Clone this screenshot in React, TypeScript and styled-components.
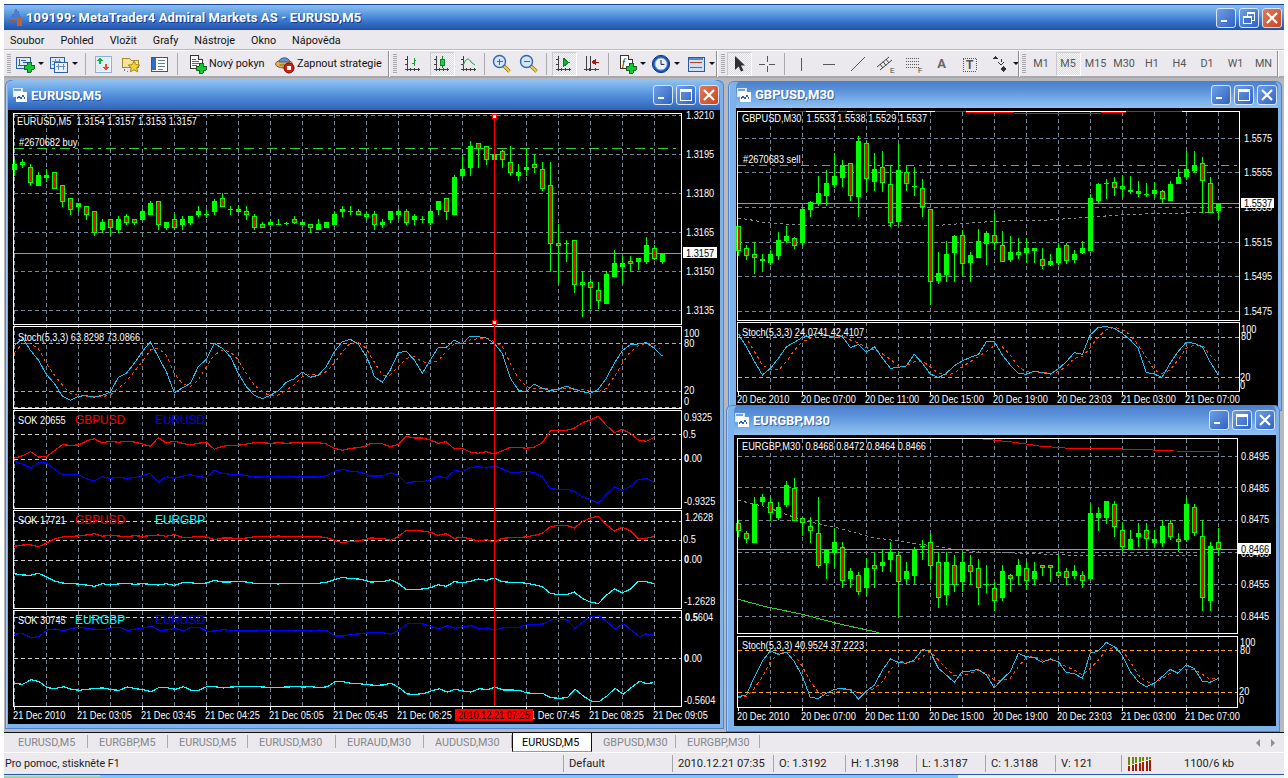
import React from "react";
import styled, { createGlobalStyle } from "styled-components";

const UI = `Roboto, "Liberation Sans", sans-serif`;
const CHART = `"Liberation Sans", Arial, sans-serif`;

const Global = createGlobalStyle`
  html, body { margin: 0; padding: 0; background: #fff; }
  #root { width: 1288px; height: 778px; overflow: hidden; }
`;

const Page = styled.div`
  width: 1288px; height: 778px; background: #fff; display: flex; flex-direction: column;
  padding-top: 4px; box-sizing: border-box; overflow: hidden;
  font-family: ${UI}; font-size: 11px; color: #222;
`;
const AppWindow = styled.div`
  width: 1280px; margin-left: 4px; height: 770px; display: flex; flex-direction: column; background: #ebe9ed;
`;
const AppTitle = styled.div`
  height: 26px; box-sizing: border-box; border-top: 1px solid #1c46a4; display: flex; align-items: center; padding-left: 5px;
  background: linear-gradient(#86bcee 0, #7cb4ea 12%, #4f8fdb 45%, #3470c6 70%, #2650aa 100%);
`;
const AppTitleText = styled.div`
  font: 700 13px ${UI}; color: #fff; text-shadow: 1px 1px 0 #16388c; margin-left: 2px; letter-spacing: .12px; white-space: pre;
`;
const Spacer = styled.div` flex: 1; `;
const Controls = styled.div<{ $gap?: number; $right: number }>`
  display: flex; gap: ${p => p.$gap ?? 3}px; margin-right: ${p => p.$right}px;
`;
const Ctl = styled.div<{ $red?: boolean; $size?: number }>`
  width: ${p => p.$size ?? 20}px; height: ${p => p.$size ?? 20}px; box-sizing: border-box; border: 1px solid #d8e6f8; border-radius: 3px;
  display: flex; align-items: center; justify-content: center;
  background: ${p => p.$red ? "linear-gradient(135deg,#e07a5a,#c9451f)" : "linear-gradient(135deg,#6f9fe4,#2f62c4)"};
`;
const Menu = styled.div`
  height: 20px; display: flex; align-items: center; background: #ebe9ed;
`;
const MenuItem = styled.div` padding: 0 8px; font-size: 10.8px; color: #111; &:first-child { margin-left: -2px; } `;
const Toolbar = styled.div`
  height: 28px; box-sizing: border-box; border-top: 1px solid #fff; border-bottom: 2px solid #a8a7ab; display: flex; align-items: center; background: #ebe9ed;
  box-shadow: 0 -1px 0 #b9b8bc;
  position: relative;
`;
const Grip = styled.div<{ $w: number }>`
  width: ${p => p.$w}px; flex: none; align-self: stretch; display: flex; justify-content: center; align-items: center;
  &::before { content: ""; width: 4px; height: 20px; background: repeating-linear-gradient(#a9a8ac 0 1px, transparent 1px 2px); }
`;
const Sep = styled.div<{ $w: number }>`
  width: ${p => p.$w}px; flex: none; height: 22px; display: flex; justify-content: center;
  &::before { content: ""; width: 1px; background: #aaa9ad; }
`;
const EndSep = styled.div<{ $w: number }>`
  width: ${p => p.$w}px; flex: none; height: 26px; display: flex; justify-content: flex-start;
  &::before { content: ""; width: 1px; background: #8f8e92; box-shadow: 1px 0 0 #fff; }
`;
const Slot = styled.div<{ $w: number; $start?: number }>`
  width: ${p => p.$w}px; flex: none; height: 24px; display: flex; align-items: center;
  justify-content: ${p => p.$start !== undefined ? "flex-start" : "center"};
  padding-left: ${p => p.$start ?? 0}px; box-sizing: border-box;
`;
const Face = styled.div<{ $active?: boolean }>`
  width: 25px; height: 24px; box-sizing: border-box; display: flex; align-items: center; justify-content: center;
  color: #555; font-size: 10.8px;
  ${p => p.$active ? `
    border: 1px solid; border-color: #c9c8cc #fff #fff #c9c8cc;
    background-color: #f6f5f8;
    background-image: conic-gradient(#dcdbe0 25%, transparent 0 50%, #dcdbe0 0 75%, transparent 0);
    background-size: 2px 2px;
  ` : ""}
`;
const Caret = styled.span`
  width: 0; height: 0; margin-left: 3px; border: 3px solid transparent; border-top: 3px solid #111; border-bottom: 0; flex: none;
`;
const ToolText = styled.span` margin-left: 2px; font-size: 10.8px; color: #111; white-space: nowrap; `;
const LetterA = styled.span` font-weight: 700; font-size: 13px; color: #666; `;
const Mdi = styled.div`
  height: 654px; position: relative; background: #b8b7bb; overflow: hidden;
`;
const ChildWindow = styled.div<{ $x: number; $y: number; $w: number; $h: number; $pad: string }>`
  position: absolute; left: ${p => p.$x}px; top: ${p => p.$y}px; width: ${p => p.$w}px; height: ${p => p.$h}px;
  box-sizing: border-box; padding: ${p => p.$pad}; border-radius: 6px 6px 0 0; display: flex; flex-direction: column;
  background: #7fb2ea; box-shadow: inset 0 0 0 1px #4f83cf, inset 2px 0 0 #a9cdf3;
`;
const ChildTitle = styled.div<{ $active?: boolean; $h: number; $left: number }>`
  height: ${p => p.$h}px; flex: none; display: flex; align-items: center; padding-left: ${p => p.$left}px; border-radius: 6px 6px 0 0;
  background: ${p => p.$active
    ? "linear-gradient(#8fc2f0 0, #74ade8 22%, #4f8cd9 55%, #2f64b8 100%)"
    : "linear-gradient(#4a7ecb 0, #5c92da 35%, #7cb2ea 75%, #90c2f0 100%)"};
`;
const ChildTitleText = styled.div`
  font: 700 13px ${UI}; color: #fff; margin-left: 4px; white-space: pre; text-shadow: 1px 1px 0 rgba(24,60,140,.65);
`;
const Client = styled.div` flex: 1; background: #000; min-height: 0; overflow: hidden; line-height: 0; `;
const ChartSvg = styled.svg` display: block; `;
const Tabs = styled.div`
  height: 20px; box-sizing: border-box; border-top: 1px solid #111; display: flex; align-items: stretch; background: #ebe9ed; flex: none;
`;
const Tab = styled.div<{ $w: number; $active?: boolean }>`
  width: ${p => p.$w}px; box-sizing: border-box; display: flex; align-items: center; padding-left: ${p => p.$active ? 9 : 11}px;
  font-size: 10.8px; color: ${p => p.$active ? "#000" : "#85858a"};
  &:first-child { padding-left: 14px; }
  ${p => p.$active
    ? `background: #fff; border: 1px solid #111; border-bottom: 1px solid #999; margin-top: -1px;`
    : `background: linear-gradient(#aaa,#aaa) right 2px / 1px 13px no-repeat;`}
`;
const TabArrows = styled.div` margin-left: auto; display: flex; align-items: center; gap: 11px; margin-right: 9px; `;
const Arrow = styled.span<{ $left?: boolean }>`
  width: 0; height: 0; border: 4px solid transparent; border-right-width: ${p => p.$left ? 4 : 0}px; border-left-width: ${p => p.$left ? 0 : 4}px;
  border-right-color: #8f8e92; border-left-color: #8f8e92;
`;
const Status = styled.div`
  height: 22px; box-sizing: border-box; border-top: 1px solid #fff; display: flex; align-items: center; background: #ebe9ed; flex: none;
`;
const Cell = styled.div<{ $w: number; $first?: boolean }>`
  width: ${p => p.$w}px; box-sizing: border-box; height: 17px; display: flex; align-items: center; flex: none; white-space: nowrap;
  padding-left: ${p => p.$first ? 1 : 5}px; font-size: ${p => p.$first ? 10.7 : 11.2}px; color: #222;
  ${p => p.$first ? "" : "border-left: 1px solid #a5a4a8;"}
`;
const Traffic = styled.span` font-size: 11px; margin-left: 3px; `;
const Taskbar = styled.div`
  height: 4px; display: flex; border-top: 1px solid #2458b8; margin-left: 4px; width: 1280px; flex: none;
`;
const TaskStart = styled.div` width: 96px; background: linear-gradient(#d2ecd2,#6fb56f); `;
const TaskBand = styled.div` width: 858px; background: #8cc2ec; `;
const TaskRest = styled.div` flex: 1; background: #eef4f2; `;

/* ---------- chart text ---------- */
const T = styled.text<{ $fill?: string; $size?: number }>`
  font-family: ${CHART}; font-size: ${p => p.$size ?? 11}px; fill: ${p => p.$fill ?? "#fff"};
`;
const Lbl: React.FC<{ x: number; y: number; c?: string; s?: number; sx?: number; children: React.ReactNode }> = ({ x, y, c, s, sx = .84, children }) => (
  <T $fill={c} $size={s} xmlSpace="preserve" transform={`translate(${x} ${y + 4}) scale(${sx} 1)`}>{children}</T>
);
const Zero: React.FC<{ x: number; y: number }> = ({ x, y }) => <Lbl x={x} y={y}><tspan fontWeight={700}>0</tspan>.00</Lbl>;

/* ---------- icons ---------- */
const Ic: React.FC<{ w?: number; h?: number; children: React.ReactNode; v?: string }> = ({ w = 20, h = 20, v = "0 0 20 20", children }) => (
  <svg width={w} height={h} viewBox={v} shapeRendering="crispEdges" style={{ flex: "none", display: "block" }}>{children}</svg>
);
const Plus: React.FC<{ x: number; y: number }> = ({ x, y }) => (
  <g>
    <path d={`M${x + 3} ${y}h4v3h3v4h-3v3h-4v-3h-3v-4h3z`} fill="#14c832" stroke="#0a5a20" strokeWidth=".9" />
  </g>
);
const Axes: React.FC<{ d?: string }> = ({ d = "#3f3f3f" }) => (
  <path d="M4 2v15M2 15.5h15M7 14v3M11 14v3M15 14v3M2 5h2M2 10h2" stroke={d} fill="none" />
);
const IconNewChart = () => (<Ic><rect x="1" y="3" width="14" height="11" fill="#dbe9fb" stroke="#2e5fa8" /><path d="M4 5v7M3 11h9M6 6h5M8 8h4" stroke="#2e5fa8" /><Plus x={9} y={8} /></Ic>);
const IconTemplates = () => (<Ic><rect x="1" y="3" width="14" height="11" fill="#dbe9fb" stroke="#2e5fa8" /><path d="M3 7h9M3 10h9M6 5v7M10 5v7" stroke="#6c8cc0" /><rect x="5" y="8" width="13" height="10" fill="#e8f1fc" stroke="#2e5fa8" /><path d="M7 12h9M9 10v6M14 10v6" stroke="#6c8cc0" /></Ic>);
const IconMarket = () => (<Ic v="0 0 20 20"><rect x="2" y="2" width="16" height="16" fill="#f4f8fd" stroke="#8fb0d8" /><rect x="3" y="3" width="14" height="14" fill="#e3edf9" /><path d="M7 3l3 4H8v3H6V7H4z" fill="#18b040" /><path d="M13 17l-3-4h2v-3h2v3h2z" fill="#e0502a" /></Ic>);
const IconFolderStar = () => (<Ic><path d="M1 4h7l2 2h7v7H1z" fill="#f6e39a" stroke="#a08a30" /><path d="M3 15v2M6 17h1M1 13v1" stroke="#777" /><path d="M13 7l1.8 3.6 4 .5-3 2.7.9 4-3.7-2-3.6 2 .8-4-3-2.7 4-.5z" fill="#f5d327" stroke="#8c7410" strokeWidth=".8" shapeRendering="auto" /></Ic>);
const IconNavigator = () => (<Ic><rect x="2" y="3" width="16" height="14" fill="#fff" stroke="#2a5aa6" /><rect x="3" y="4" width="4" height="12" fill="#2f6cc4" /><path d="M9 6h7M9 9h7M9 12h7M9 15h5" stroke="#5c7da8" /></Ic>);
const IconOrder = () => (<Ic><path d="M3 1h8l4 4v9H3z" fill="#fff" stroke="#333" /><path d="M11 1v4h4" fill="#ddd" stroke="#333" /><path d="M5 5h4M5 7h7M5 9h7M5 11h5" stroke="#666" /><Plus x={9} y={9} /></Ic>);
const IconStrategy = () => (<Ic w={20} h={20}><g shapeRendering="auto"><ellipse cx="9" cy="10" rx="8.5" ry="4" fill="#e3b255" stroke="#7f5c20" /><path d="M4 8c0-5 10-6 11 0z" fill="#6a92c8" stroke="#3f5f90" /><ellipse cx="9" cy="11" rx="5" ry="1.3" fill="#b98732" /><circle cx="14" cy="14" r="5" fill="#d41f12" stroke="#6d0c06" /><rect x="12" y="12" width="4" height="4" fill="#fff" /></g></Ic>);
const IconBars = () => (<Ic><Axes /><path d="M11 4v8M9 9h2M11 6h2" stroke="#14a030" /></Ic>);
const IconCandle = () => (<Ic><Axes /><path d="M10 2v12" stroke="#14802a" /><rect x="8" y="5" width="4" height="6" fill="#16d63c" stroke="#14802a" /></Ic>);
const IconLine = () => (<Ic><Axes /><path d="M4 12c3-9 6-8 8-4l4 3" stroke="#14a030" fill="none" shapeRendering="auto" /></Ic>);
const Magnifier: React.FC<{ plus?: boolean }> = ({ plus }) => (
  <Ic><g shapeRendering="auto"><path d="M11.5 11.5l6 6" stroke="#8a6d10" strokeWidth="3.4" /><path d="M11.5 11.5l6 6" stroke="#f0d04a" strokeWidth="2" /><circle cx="7.5" cy="7.5" r="6" fill="#d4e6fa" stroke="#2f68b4" strokeWidth="1.4" /></g><path d="M4.5 7.5h6" stroke="#2f68b4" strokeWidth="1.4" />{plus && <path d="M7.5 4.5v6" stroke="#2f68b4" strokeWidth="1.4" />}</Ic>
);
const IconAuto = () => (<Ic><Axes /><path d="M9 4l6 4.5-6 4.5z" fill="#14b034" stroke="#0e7a26" /></Ic>);
const IconShift = () => (<Ic><path d="M4 2v15M2 15.5h15M8 2v15M7 14v3M13 14v3" stroke="#3f3f3f" /><path d="M17 8h-4M13 6l-3 2 3 2z" fill="#b01808" stroke="#b01808" /></Ic>);
const IconIndicators = () => (<Ic><path d="M3 1h8l4 4v9H3z" fill="#fff" stroke="#333" /><path d="M11 1v4h4" fill="#ddd" stroke="#333" /><text x="5" y="12" fontFamily="Liberation Serif" fontStyle="italic" fontSize="11" fill="#222">f</text><Plus x={9} y={9} /></Ic>);
const IconClock = () => (<Ic><g shapeRendering="auto"><circle cx="10" cy="10" r="8.6" fill="#1c56b4" stroke="#0e3a84" /><circle cx="10" cy="10" r="6" fill="#eaf2fb" stroke="#8ab2e4" /><path d="M10 6v4.4h3.4" stroke="#222" fill="none" /></g></Ic>);
const IconTemplateWin = () => (<Ic><rect x="2" y="3" width="16" height="14" fill="#cfe0f6" stroke="#2a5aa6" /><rect x="3" y="4" width="14" height="2" fill="#4f88d4" /><path d="M4 9l2-1 3 1 3-1 4 1" stroke="#c0401c" fill="none" /><path d="M4 13l2 1 3-1 3 1 4-1" stroke="#14a030" fill="none" /></Ic>);
const IconCursor = () => (<Ic><path d="M5 2v14l3.6-3.4 2.4 5 2.4-1.2-2.4-4.8H15z" fill="#2c3034" shapeRendering="auto" /></Ic>);
const IconCross = () => (<Ic><path d="M10 2v6M10 12v6M2 10h6M12 10h6" stroke="#555" /></Ic>);
const IconV = () => (<Ic><path d="M10 4v13" stroke="#555" /></Ic>);
const IconH = () => (<Ic><path d="M3 10h12" stroke="#555" /></Ic>);
const IconTrend = () => (<Ic><path d="M3 17L17 3" stroke="#555" shapeRendering="auto" /></Ic>);
const IconChannel = () => (<Ic><g stroke="#444" shapeRendering="auto"><path d="M1 13L13 3M4 16L16 6M4 10l3 4M7 7.5l3 4M10 5l3 4" /></g><text x="14" y="19" fontFamily="Liberation Sans" fontSize="7" fill="#444">E</text></Ic>);
const IconFibo = () => (<Ic><path d="M2 4h14M2 7h14M2 10h14M2 13h14" stroke="#555" strokeDasharray="1 1" /><text x="14" y="19" fontFamily="Liberation Sans" fontSize="7" fill="#444">F</text></Ic>);
const IconTextBox = () => (<Ic><rect x="3" y="4" width="13" height="13" fill="none" stroke="#555" strokeDasharray="1 1" /><text x="6" y="15" fontFamily="Liberation Sans" fontSize="12" fontWeight="700" fill="#555">T</text></Ic>);
const IconArrows = () => (<Ic><path d="M2 5l3-3 3 3z" fill="#333" /><path d="M8 8l3 3 3-3M11 5v3" fill="none" stroke="#333" /><path d="M10 15l3 3 3-3-3-3z" fill="#333" /></Ic>);
const IconSignal = () => (
  <Ic w={26} h={16} v="0 0 26 16">
    {[0, 1, 2, 3, 4, 5, 6].map(i => (
      <g key={i}>
        <rect x={1 + i * 3.5} y={1} width={2.4} height={8 - i} fill="#6b8c00" />
        <rect x={1 + i * 3.5} y={10 - i} width={2.4} height={i + 5} fill="#a01e06" />
      </g>
    ))}
  </Ic>
);
const IconLogo = () => (
  <Ic w={15} h={20} v="0 0 15 20">
    <path d="M7 1v8M3 7h8M2 9h10" stroke="#4a7ac8" strokeWidth="1.4" /><rect x="5" y="3" width="5" height="6" fill="#4d80cc" />
    <rect x="1" y="12" width="5" height="2" fill="#c84a2c" /><rect x="8" y="10" width="5" height="8" fill="#c8602c" />
  </Ic>
);
const IconChild = () => (
  <Ic w={14} h={14} v="0 0 14 14">
    <rect x="0" y="0" width="9" height="8" fill="#f4f8fd" stroke="#d8e6f8" /><rect x="1" y="1" width="7" height="2" fill="#6f9fe4" />
    <rect x="3" y="4" width="11" height="10" fill="#fff" /><path d="M4 11l2-3 2 3 2-4 2 4" stroke="#2f62c4" fill="none" />
  </Ic>
);
const GMin = () => <Ic w={12} h={12} v="0 0 12 12"><rect x="1" y="8" width="6" height="2.4" fill="#fff" /></Ic>;
const GMax = () => <Ic w={14} h={14} v="0 0 14 14"><rect x="1.5" y="1.5" width="11" height="11" fill="none" stroke="#fff" /><rect x="1" y="1" width="12" height="2.5" fill="#fff" /></Ic>;
const GRestore = () => <Ic w={14} h={14} v="0 0 14 14"><rect x="5" y="1.5" width="7.5" height="7.5" fill="none" stroke="#fff" /><rect x="5" y="1" width="8" height="2" fill="#fff" /><rect x="1.5" y="5" width="7.5" height="7.5" fill="#3f72cc" stroke="#fff" /><rect x="1" y="5" width="8" height="2" fill="#fff" /></Ic>;
const GClose = () => <Ic w={14} h={14} v="0 0 14 14"><path d="M2 2l10 10M12 2L2 12" stroke="#fff" strokeWidth="2.2" shapeRendering="auto" /></Ic>;

/* ---------- chart data ---------- */
type C = [number, number, number, number, number];
type Pt = [number, number];
const eurM5: C[] = [
  [177,192,210,228,1],[178,186,194,203,0],[192,202,248,258,0],[216,225,258,258,1],[207,225,234,245,1],[216,216,267,267,0],[255,255,306,322,0],[294,294,330,345,0],
  [309,309,321,336,1],[318,318,345,360,0],[333,333,399,408,0],[357,366,390,399,1],[357,357,384,408,0],[348,357,390,399,1],[342,348,369,375,0],[357,357,369,375,0],
  [327,333,360,360,1],[303,309,345,345,1],[303,303,375,390,0],[366,366,384,390,1],[342,357,384,390,0],[348,357,375,390,1],[348,348,369,375,1],[318,333,345,351,1],
  [327,342,345,354,1],[297,303,336,345,1],[279,294,321,321,0],[318,327,330,345,1],[318,327,336,336,1],[318,333,345,360,0],[342,348,384,390,0],[366,372,384,384,0],
  [357,366,375,375,1],[357,372,375,375,1],[366,368,371,375,1],[348,357,369,372,0],[363,366,375,375,1],[372,372,384,399,0],[357,372,390,390,1],[366,366,384,384,1],
  [333,342,375,375,1],[318,327,336,350,1],[318,332,335,345,1],[327,333,345,345,0],[333,342,351,360,0],
  [333,342,375,390,0],[357,366,375,384,1],[333,333,360,369,1],[327,333,345,360,1],[327,333,369,375,0],[342,348,360,375,1],[348,357,360,369,1],[327,333,369,375,1],
  [303,303,330,345,1],[294,294,336,360,0],[225,231,345,345,1],[165,207,228,234,1],[123,138,204,228,1],[129,129,147,204,0],[138,138,180,195,0],[162,162,180,180,1],
  [150,153,180,204,0],[138,186,219,228,0],[192,216,228,243,1],[144,201,210,228,1],[162,192,204,219,0],[186,207,267,273,0],[186,255,432,516,0],[372,429,438,552,0],
  [420,428,431,486,1],[420,420,555,579,0],[513,546,555,651,0],[537,546,564,627,0],[546,570,603,627,0],[513,522,612,612,1],[450,489,531,531,1],[468,489,501,552,1],
  [468,483,492,516,0],[474,474,486,510,1],[411,435,486,492,1],[435,444,477,480,0],[459,459,486,492,1],
];
const gbpM30: C[] = [
  [438,438,512,528,0],[495,505,527,540,0],[485,523,533,582,0],[522,538,544,575,0],[510,523,549,555,1],[455,481,527,540,1],[438,468,482,490,1],[470,475,497,506,0],
  [380,388,490,497,1],[362,367,389,410,1],[288,340,370,378,1],[270,310,347,378,1],[218,288,314,325,1],[240,256,293,320,1],[250,250,347,362,0],[168,183,350,410,1],
  [183,190,298,335,0],[218,268,305,333,1],[212,262,310,335,0],[255,313,428,440,0],[192,270,425,435,1],[258,277,313,333,0],[262,318,321,347,1],[297,325,382,410,0],
  [388,388,605,675,0],[515,580,603,612,1],[483,522,585,605,1],[465,468,518,605,1],[450,465,553,585,0],[517,525,549,605,1],[447,484,533,535,1],[452,458,491,555,1],
  [398,465,490,510,0],[453,496,545,547,0],[468,516,540,545,1],[473,517,524,537,0],[475,504,518,548,1],[505,505,513,550,1],[505,538,558,567,0],[522,544,555,557,1],
  [490,504,549,555,1],[490,496,544,553,0],[510,523,540,550,1],[484,504,518,523,1],[343,355,513,513,1],[310,312,362,370,1],[297,310,313,357,1],[290,305,325,347,0],
  [288,319,326,350,0],[288,330,336,342,1],[303,334,342,352,1],[310,341,346,350,0],[305,331,342,350,1],[330,334,356,370,0],[304,313,362,362,1],[268,292,311,312,1],
  [213,268,290,300,1],[213,256,273,278,1],[232,250,304,398,0],[292,310,398,398,0],[368,370,392,420,1],
];
const eurgbpM30: C[] = [
  [345,355,377,395,0],[377,385,403,413,0],[277,298,413,413,1],[268,277,290,300,1],[277,290,325,348,0],[290,307,340,345,1],[228,240,300,307,1],[220,250,347,347,0],
  [337,338,355,392,0],[337,364,377,413,0],[277,385,482,490,0],[433,433,474,522,1],[368,411,443,490,1],[411,425,529,548,0],[490,498,522,548,1],[500,511,560,570,0],
  [460,490,549,574,1],[442,481,491,548,0],[433,472,483,500,1],[412,442,465,500,1],[442,451,530,635,0],[470,498,522,538,1],[425,433,513,538,1],[404,424,427,465,1],
  [385,412,482,522,0],[442,472,578,608,0],[442,472,570,600,1],[450,481,539,560,0],[442,472,530,560,1],[450,481,500,540,0],[462,490,548,600,0],[480,538,541,565,1],
  [532,548,587,617,0],[480,498,579,587,1],[507,511,521,560,0],[462,481,512,540,1],[470,490,529,555,0],[472,498,521,540,1],[481,481,490,512,0],[481,481,490,530,0],
  [450,500,512,520,0],[490,499,520,540,0],[480,498,513,522,1],[498,511,529,548,0],[297,325,522,522,1],[307,325,338,377,1],[288,288,338,356,1],[288,298,365,395,0],
  [350,376,425,442,0],[375,403,433,433,1],[355,385,395,425,1],[355,376,403,433,0],[375,403,413,425,1],[345,364,413,425,1],[345,355,395,405,0],[385,403,412,442,0],
  [277,298,404,412,1],[297,307,385,394,0],[345,394,578,617,0],[412,424,587,617,1],[370,412,432,452,0],
];

const P = (a: number[], fx: (x: number) => number, fy: (y: number) => number): Pt[] => {
  const out: Pt[] = [];
  for (let i = 0; i < a.length; i += 2) out.push([fx(a[i]), fy(a[i + 1])]);
  return out;
};
const str = (p: Pt[]) => p.map(q => `${q[0].toFixed(1)},${q[1].toFixed(1)}`).join(" ");

const L6 = (x: number) => x / 3;
const L7 = (x: number) => 370 + x / 3;
const Y3 = (y: number) => 320 + y / 3;
const raw = (y: number) => y;

const eurStochBlue = [
  ...P([42,78,68,55,92,92,115,120,139,163,163,190,187,228,211,241,235,229,259,227,283,232,307,226,331,217,355,172,379,160,403,130,427,95,451,65,475,110,499,155,523,218,547,204,571,190,595,140,619,118,643,70,667,85,691,110,715,160,739,200,763,226,787,236,811,226,835,212,859,187,883,176,907,156,931,172,955,166,979,140,1003,95,1027,65,1051,58,1075,72,1099,110], L6, Y3),
  ...P([0,134,13,170,37,187,61,150,85,98,109,94,133,120,157,160,181,120,205,82,229,82,253,60,277,72,301,48,325,50,349,54,373,70,397,100,421,175,445,210,469,216,493,192,517,205,541,212,565,208,589,198,613,208,637,215,661,220,685,208,709,175,733,130,757,92,781,74,805,72,829,68,853,85,877,108], L7, Y3),
];
const eurStochRed = [
  ...P([42,100,68,70,92,72,115,85,139,130,163,165,187,195,211,220,235,226,259,228,283,230,307,230,331,225,355,205,379,185,403,155,427,125,451,90,475,85,499,105,523,160,547,190,571,200,595,180,619,140,643,105,667,90,691,95,715,120,739,160,763,195,787,215,811,228,835,225,859,210,883,195,907,170,931,163,955,165,979,155,1003,130,1027,95,1051,70,1075,68,1099,85], L6, Y3),
  ...P([0,105,37,165,61,165,85,140,109,115,133,110,157,125,181,130,205,122,229,95,253,72,277,68,301,60,325,56,349,54,373,65,397,80,421,130,445,175,469,200,493,205,517,205,541,207,565,208,589,205,613,207,637,208,661,214,685,215,709,205,733,170,757,130,781,95,805,78,829,70,853,75,869,85], L7, Y3),
];
const sok1 = [
  ...P([42,415,68,407,92,395,115,411,139,410,163,392,187,374,211,376,235,375,259,363,283,356,307,369,331,364,355,367,379,364,403,366,427,372,451,379,475,353,499,369,523,364,547,370,571,375,595,370,619,366,643,388,667,379,691,376,715,376,739,372,763,368,787,368,811,370,835,368,859,370,883,368,907,368,931,368,955,368,979,372,1003,385,1027,391,1051,385,1075,383,1099,377], L6, raw),
  ...P([0,371,37,371,61,380,85,373,109,349,133,354,157,354,181,360,205,370,229,365,253,387,277,385,301,396,325,400,349,395,373,402,397,392,421,382,445,382,469,385,493,381,517,368,541,333,565,331,589,331,613,325,637,308,661,300,685,289,709,316,733,338,757,328,781,340,805,360,829,364,853,352], L7, raw),
];
const sok2 = [
  ...P([42,679,68,675,92,674,115,680,139,670,163,657,187,651,211,649,235,648,259,645,283,641,307,649,331,645,355,648,379,650,403,647,427,649,451,647,475,645,499,649,523,644,547,652,571,652,595,649,619,651,643,659,667,654,691,654,715,656,739,654,763,650,787,650,811,650,835,648,859,650,883,650,907,650,931,650,955,650,979,653,1003,661,1027,668,1051,664,1075,663,1099,658], L6, raw),
  ...P([0,654,37,655,61,661,85,650,109,631,133,631,157,633,181,637,205,646,229,641,253,655,277,652,301,656,325,663,349,659,373,666,397,655,421,653,445,653,469,650,493,646,517,640,541,620,565,616,589,616,613,624,637,605,661,594,685,589,709,614,733,633,757,622,781,632,805,656,829,655,853,649], L7, raw),
];
const sok3Blue = P([35,103,55,100,77,114,96,108,116,90,135,87,155,93,175,85,194,82,214,85,234,88,253,89,273,84,292,82,312,92,332,87,351,84,371,78,390,91,410,90,430,85,449,93,469,82,488,82,508,94,527,93,547,89,567,92,586,93,606,93,625,93,645,92,665,90,684,91,704,92,723,93,743,92,763,93,782,90,802,93,821,108,841,108,860,103,880,102,900,99,919,97,939,98,958,103,978,90,998,71,1017,70,1037,72,1056,80,1076,87,1096,77,1115,85,1135,80,1154,77,1174,87,1194,84,1213,91,1233,83,1252,83,1272,82,1291,74,1311,73,1331,72,1350,60,1370,58,1390,60,1409,85,1429,65,1448,50,1468,48,1487,65,1507,88,1527,70,1546,90,1568,110,1582,102,1600,105], x => x / 2.45, raw);

const gbpIdx = (x: number) => 730 + x / 2.8125;
const gbpBlue = P([23,762,46,800,69,845,91,885,114,865,136,835,159,800,181,787,204,772,226,768,249,758,271,765,294,773,316,770,339,803,361,793,384,817,406,800,429,835,451,865,473,862,496,858,518,823,541,850,563,882,586,893,608,880,631,857,653,843,676,832,698,824,721,785,743,785,766,825,788,855,811,880,833,883,856,873,878,878,901,882,923,867,946,845,968,818,991,823,1013,765,1036,742,1058,740,1081,745,1103,760,1126,780,1148,805,1170,877,1193,882,1215,892,1238,850,1260,815,1283,787,1305,790,1328,800,1350,845,1373,885], gbpIdx, y => 80 + y / 3);
const gbpRed = P([23,762,46,775,69,815,91,855,114,868,136,870,159,845,181,810,204,785,226,775,249,765,271,765,294,770,316,768,339,780,361,788,384,803,406,810,429,822,451,838,473,858,496,858,518,845,541,843,563,860,586,880,608,885,631,880,653,860,676,845,698,830,721,815,743,797,766,800,788,825,811,860,833,875,856,875,878,877,901,880,923,875,946,860,968,835,991,830,1013,803,1036,770,1058,750,1081,742,1103,748,1126,765,1148,795,1170,830,1193,870,1215,880,1238,870,1260,840,1283,805,1305,795,1328,795,1350,825,1373,850], gbpIdx, y => 80 + y / 3);
const gbpMa = P([23,415,50,418,100,428,200,435,300,437,400,438,500,437,600,435,700,427,800,422,900,420,1000,412,1100,405,1200,400,1373,398], gbpIdx, y => 80 + y / 3);
const egBlue = P([23,875,46,870,69,815,91,768,114,737,136,748,159,742,181,770,204,815,226,878,249,880,271,865,294,853,316,850,339,855,361,882,384,858,406,840,429,795,451,762,473,772,496,775,518,765,541,733,563,740,586,790,608,810,631,832,653,800,676,798,698,793,721,810,743,848,766,822,788,800,811,745,833,755,856,758,878,772,901,762,923,770,946,803,968,805,991,820,1013,745,1036,738,1058,712,1081,725,1103,750,1126,800,1148,830,1170,845,1193,835,1215,815,1238,793,1260,805,1283,780,1305,790,1328,828,1350,832,1373,820], gbpIdx, y => 405 + y / 3);
const egRed = P([23,877,46,875,69,850,91,815,114,770,136,745,159,740,181,750,204,785,226,830,249,862,271,873,294,865,316,855,339,853,361,865,384,863,406,850,429,830,451,793,473,770,496,772,518,770,541,755,563,740,586,765,608,790,631,812,653,813,676,805,698,797,721,805,743,825,766,825,788,820,811,785,833,757,856,755,878,765,901,765,923,770,946,785,968,795,991,810,1013,790,1036,765,1058,735,1081,727,1103,735,1126,770,1148,810,1170,830,1193,835,1215,822,1238,805,1260,795,1283,792,1305,792,1328,808,1350,822,1373,820], gbpIdx, y => 405 + y / 3);
const egMa = P([23,286,100,305,200,345,300,368,400,397,500,412,600,428,700,441,800,444,1000,452,1200,450,1320,450], gbpIdx, y => 405 + y / 3);
const egGreen = P([23,583,100,605,200,627,300,655,420,683], gbpIdx, y => 405 + y / 3);
const egTop = P([712,102,800,112,870,123,980,132,1040,130,1190,135,1250,138,1373,139], gbpIdx, y => 405 + y / 3);

/* ---------- chart pieces ---------- */
const GRID = "#778899";
const DASH = "4 3";
const Candles: React.FC<{ data: C[]; x0: number; y0: number }> = ({ data, x0, y0 }) => (
  <g shapeRendering="crispEdges">
    {data.map(([h, t, b, l, k], i) => {
      const x = x0 + 8 * i;
      const top = Math.round(y0 + t / 3), bot = Math.max(Math.round(y0 + b / 3), top + 1);
      const hi = Math.round(y0 + h / 3), lo = Math.round(y0 + l / 3);
      return (
        <g key={i}>
          <rect x={x} y={hi} width={1} height={Math.max(lo - hi, 1)} fill="#00ff00" />
          <rect x={x - 2} y={top} width={5} height={bot - top} fill="#00ff00" />
          {k === 0 && bot - top > 2 && <rect x={x - 1} y={top + 1} width={3} height={bot - top - 2} fill="#ff0000" />}
        </g>
      );
    })}
  </g>
);
const PLine: React.FC<{ p: Pt[]; c: string; dash?: string; w?: number }> = ({ p, c, dash, w = 1 }) => (
  <polyline points={str(p)} fill="none" stroke={c} strokeWidth={w} strokeDasharray={dash} shapeRendering="crispEdges" />
);
const HDash: React.FC<{ y: number; x1: number; x2: number; c?: string; dash?: string }> = ({ y, x1, x2, c = GRID, dash = DASH }) => (
  <line x1={x1} x2={x2} y1={y + .5} y2={y + .5} stroke={c} strokeDasharray={dash} shapeRendering="crispEdges" />
);
const VGrid: React.FC<{ x0: number; n: number; y1: number; y2: number }> = ({ x0, n, y1, y2 }) => (
  <g>{Array.from({ length: n }, (_, k) => (
    <line key={k} x1={x0 + 32 * k + .5} x2={x0 + 32 * k + .5} y1={y1} y2={y2} stroke={GRID} strokeDasharray={DASH} shapeRendering="crispEdges" />
  ))}</g>
);
const Pane: React.FC<{ x: number; y: number; w: number; h: number }> = ({ x, y, w, h }) => (
  <rect x={x + .5} y={y + .5} width={w} height={h} fill="none" stroke="#fff" shapeRendering="crispEdges" />
);
const Ticks: React.FC<{ x0: number; n: number; y: number }> = ({ x0, n, y }) => (
  <g>{Array.from({ length: n }, (_, k) => <rect key={k} x={x0 + 64 * k} y={y} width={1} height={4} fill="#fff" />)}</g>
);
const PriceBox: React.FC<{ x: number; y: number; w: number; h: number; text: string }> = ({ x, y, w, h, text }) => (
  <g><rect x={x} y={y} width={w} height={h} fill="#fff" shapeRendering="crispEdges" /><Lbl x={x + 3} y={y + h / 2} c="#000">{text}</Lbl></g>
);

const EurChart = () => {
  const X = 8, Y = 110, W = 712, H = 614;
  const hLevels = [115, 154, 193, 232, 271, 310];
  const tf = ["21 Dec 2010","21 Dec 03:05","21 Dec 03:45","21 Dec 04:25","21 Dec 05:05","21 Dec 05:45","21 Dec 06:25"];
  return (
    <ChartSvg width={W} height={H} viewBox={`${X} ${Y} ${W} ${H}`}>
      <VGrid x0={14} n={21} y1={114} y2={706} />
      {hLevels.map(y => <HDash key={y} y={y} x1={14} x2={681} />)}
      <HDash y={148} x1={14} x2={681} c="#32cd32" dash="10 5 3 5" />
      <line x1={14} x2={681} y1={253.5} y2={253.5} stroke="#8f9aa6" shapeRendering="crispEdges" />
      <Candles data={eurM5} x0={14} y0={100} />
      <Pane x={13} y={113} w={668} h={211} />
      <Pane x={13} y={326} w={668} h={82} />
      <Pane x={13} y={410} w={668} h={98} />
      <Pane x={13} y={510} w={668} h={98} />
      <Pane x={13} y={610} w={668} h={96} />
      <HDash y={343} x1={14} x2={681} c="#ffa500" />
      <HDash y={391} x1={14} x2={681} c="#ffa500" />
      <HDash y={407} x1={14} x2={681} c="#b8b8b8" />
      <PLine p={eurStochRed} c="#ff4500" dash="3 3" />
      <PLine p={eurStochBlue} c="#19bdf0" />
      {[434, 459].map(y => <HDash key={y} y={y} x1={14} x2={681} c="#d0d0d0" />)}
      <PLine p={sok1.map((q): Pt => [q[0], Y3(q[1])])} c="#ff0000" w={1.2} />
      <PLine p={sok1.map((q): Pt => [q[0], Y3(839 - q[1])])} c="#0000ff" w={1.2} />
      {[521, 540, 560].map(y => <HDash key={y} y={y} x1={14} x2={681} c="#d0d0d0" />)}
      <PLine p={sok2.map((q): Pt => [q[0], Y3(q[1])])} c="#ff0000" w={1.2} />
      <PLine p={sok2.map((q): Pt => [q[0], Y3(1440 - q[1])])} c="#00ffff" w={1.2} />
      {[617, 658].map(y => <HDash key={y} y={y} x1={14} x2={681} c="#d0d0d0" />)}
      <PLine p={sok3Blue.map((q): Pt => [q[0], 600 + q[1] / 3])} c="#0000ff" w={1.2} />
      <PLine p={sok3Blue.map((q): Pt => [q[0], 600 + (353 - q[1]) / 3])} c="#00ffff" w={1.2} />
      <rect x={494} y={116} width={1} height={590} fill="#ff0000" />
      <rect x={492.5} y={114.5} width={4} height={4} fill="#fff" stroke="#ff0000" />
      <rect x={492.5} y={320.5} width={4} height={4} fill="#fff" stroke="#ff0000" />

      <Lbl x={17} y={121}>EURUSD,M5  1.3154 1.3157 1.3153 1.3157</Lbl>
      <Lbl x={19} y={142}>#2670682 buy</Lbl>
      <Lbl x={18} y={337}>Stoch(5,3,3) 63.8298 73.0866</Lbl>
      <Lbl x={18} y={420}>SOK 20655</Lbl>
      <Lbl x={75} y={420} c="#ff0000" s={13.5} sx={.88}>GBPUSD</Lbl>
      <Lbl x={155} y={420} c="#0000ff" s={13.5} sx={.88}>EURUSD</Lbl>
      <Lbl x={18} y={520}>SOK 17721</Lbl>
      <Lbl x={75} y={520} c="#ff0000" s={13.5} sx={.88}>GBPUSD</Lbl>
      <Lbl x={155} y={520} c="#00ffff" s={13.5} sx={.88}>EURGBP</Lbl>
      <Lbl x={18} y={620}>SOK 30745</Lbl>
      <Lbl x={75} y={620} c="#00ffff" s={13.5} sx={.88}>EURGBP</Lbl>
      <Lbl x={155} y={620} c="#0000ff" s={13.5} sx={.88}>EURUSD</Lbl>

      {[["1.3210",115],["1.3195",154],["1.3180",193],["1.3165",232],["1.3150",271],["1.3135",310]].map(([t, y]) => <Lbl key={t as string} x={686} y={y as number}>{t}</Lbl>)}
      <PriceBox x={683} y={247} w={34} h={11} text="1.3157" />
      <Lbl x={684} y={333}>100</Lbl><Lbl x={684} y={343}>80</Lbl><Lbl x={684} y={390}>20</Lbl><Lbl x={684} y={401}>0</Lbl>
      <Lbl x={684} y={417}>0.9325</Lbl><Lbl x={683} y={434}>0.5</Lbl><Zero x={684} y={458} /><Lbl x={684} y={501}>-0.9325</Lbl>
      <Lbl x={685} y={517}>1.2628</Lbl><Lbl x={683} y={539}>0.5</Lbl><Zero x={684} y={559} /><Lbl x={684} y={601}>-1.2628</Lbl>
      <Lbl x={685} y={617}><tspan fontWeight={700}>0.5</tspan>604</Lbl><Zero x={684} y={658} /><Lbl x={684} y={700}>-0.5604</Lbl>

      <Ticks x0={14} n={11} y={706} />
      {tf.map((t, i) => <Lbl key={t} x={13 + 64 * i} y={715}>{t}</Lbl>)}
      <Lbl x={525} y={715}>21 Dec 07:45</Lbl>
      <Lbl x={589} y={715}>21 Dec 08:25</Lbl>
      <Lbl x={653} y={715}>21 Dec 09:05</Lbl>
      <rect x={455} y={709} width={78} height={12} fill="#ff0000" shapeRendering="crispEdges" />
      <Lbl x={458} y={715} c="#000">2010.12.21 07:25</Lbl>
    </ChartSvg>
  );
};

const timeLabels = ["20 Dec 2010","20 Dec 07:00","20 Dec 11:00","20 Dec 15:00","20 Dec 19:00","20 Dec 23:03","21 Dec 03:00","21 Dec 07:00"];

const GbpChart = () => {
  const X = 736, Y = 108, W = 542, H = 303;
  return (
    <ChartSvg width={W} height={H} viewBox={`${X} ${Y} ${W} ${H}`}>
      <VGrid x0={770} n={15} y1={112} y2={391} />
      {[138, 172, 207, 242, 276, 311].map(y => <HDash key={y} y={y} x1={738} x2={1239} />)}
      <HDash y={165} x1={738} x2={1239} c="#32cd32" dash="8 5 3 5" />
      <PLine p={gbpMa} c="#8a8a8a" dash="3 3" />
      <line x1={738} x2={1239} y1={203.5} y2={203.5} stroke="#8f9aa6" shapeRendering="crispEdges" />
      <Candles data={gbpM30} x0={738} y0={80} />
      <Pane x={737} y={111} w={502} h={209} />
      <Pane x={737} y={322} w={502} h={69} />
      <path d="M790 111.5h16M838 111.5h9M853 111.5h17M886 111.5h8M935 111.5h31M966 112.5h48M1014 113.5h87M1101 112.5h25M1126 111.5h56" stroke="#ff0000" fill="none" shapeRendering="crispEdges" />
      <HDash y={337} x1={738} x2={1239} c="#ffa500" />
      <HDash y={377} x1={738} x2={1239} c="#ffa500" />
      <PLine p={gbpRed} c="#ff4500" dash="3 3" />
      <PLine p={gbpBlue} c="#19bdf0" />
      <Lbl x={742} y={118}>GBPUSD,M30  1.5533 1.5538 1.5529 1.5537</Lbl>
      <Lbl x={743} y={159}>#2670683 sell</Lbl>
      <Lbl x={742} y={332}>Stoch(5,3,3) 24.0741 42.4107</Lbl>
      {[["1.5575",138],["1.5555",172],["1.5535",207],["1.5515",242],["1.5495",276],["1.5475",311]].map(([t, y]) => <Lbl key={t as string} x={1244} y={y as number}>{t}</Lbl>)}
      <PriceBox x={1241} y={198} w={33} h={10} text="1.5537" />
      <Lbl x={1241} y={329}>100</Lbl><Lbl x={1241} y={336}>80</Lbl><Lbl x={1240} y={377}>20</Lbl><Lbl x={1240} y={385}>0</Lbl>
      <Ticks x0={738} n={8} y={391} />
      {timeLabels.map((t, i) => <Lbl key={t} x={737 + 64 * i} y={399}>{t}</Lbl>)}
    </ChartSvg>
  );
};

const EurGbpChart = () => {
  const X = 734, Y = 435, W = 542, H = 291;
  return (
    <ChartSvg width={W} height={H} viewBox={`${X} ${Y} ${W} ${H}`}>
      <VGrid x0={770} n={15} y1={439} y2={707} />
      {[456, 487, 520, 552, 584, 616].map(y => <HDash key={y} y={y} x1={738} x2={1237} />)}
      <PLine p={egMa} c="#8a8a8a" dash="3 3" />
      <PLine p={egGreen} c="#32cd32" />
      <PLine p={egTop} c="#ff0000" />
      <line x1={738} x2={1237} y1={549.5} y2={549.5} stroke="#8f9aa6" shapeRendering="crispEdges" />
      <Candles data={eurgbpM30} x0={738} y0={405} />
      <Pane x={737} y={438} w={500} h={195} />
      <Pane x={737} y={636} w={500} h={71} />
      <HDash y={650} x1={738} x2={1237} c="#ffa500" />
      <HDash y={692} x1={738} x2={1237} c="#ffa500" />
      <PLine p={egRed} c="#ff4500" dash="3 3" />
      <PLine p={egBlue} c="#19bdf0" />
      <Lbl x={742} y={446}>EURGBP,M30  0.8468 0.8472 0.8464 0.8466</Lbl>
      <Lbl x={742} y={645}>Stoch(5,3,3) 40.9524 37.2223</Lbl>
      {[["0.8495",456],["0.8485",488],["0.8475",519],["0.8465",553],["0.8455",584],["0.8445",616]].map(([t, y]) => <Lbl key={t as string} x={1241} y={y as number}>{t}</Lbl>)}
      <PriceBox x={1238} y={543} w={33} h={11} text="0.8466" />
      <Lbl x={1240} y={642}>100</Lbl><Lbl x={1240} y={650}>80</Lbl><Lbl x={1239} y={691}>20</Lbl><Lbl x={1239} y={700}>0</Lbl>
      <Ticks x0={738} n={8} y={707} />
      {timeLabels.map((t, i) => <Lbl key={t} x={737 + 64 * i} y={716}>{t}</Lbl>)}
    </ChartSvg>
  );
};

const tabs: [string, number, boolean?][] = [
  ["EURUSD,M5", 84], ["EURGBP,M5", 80], ["EURUSD,M5", 80], ["EURUSD,M30", 88], ["EURAUD,M30", 88], ["AUDUSD,M30", 88],
  ["EURUSD,M5", 80, true], ["GBPUSD,M30", 84], ["EURGBP,M30", 84],
];
const menu = ["Soubor", "Pohled", "Vložit", "Grafy", "Nástroje", "Okno", "Nápověda"];
const frames = ["M1", "M5", "M15", "M30", "H1", "H4", "D1", "W1", "MN"];
const frameW = [28, 26, 29, 28, 28, 27, 28, 29, 27];

export default function App() {
  return (
    <Page>
      <Global />
      <AppWindow>
        <AppTitle>
          <IconLogo />
          <AppTitleText>109199: MetaTrader4 Admiral Markets AS - EURUSD,M5</AppTitleText>
          <Spacer />
          <Controls $right={2}>
            <Ctl><GMin /></Ctl><Ctl><GRestore /></Ctl><Ctl $red><GClose /></Ctl>
          </Controls>
        </AppTitle>
        <Menu>{menu.map(m => <MenuItem key={m}>{m}</MenuItem>)}</Menu>
        <Toolbar>
          <Grip $w={10} />
          <Slot $w={32} $start={1}><IconNewChart /><Caret /></Slot>
          <Slot $w={35} $start={3}><IconTemplates /><Caret /></Slot>
          <Sep $w={8} />
          <Slot $w={28}><IconMarket /></Slot>
          <Slot $w={28}><IconFolderStar /></Slot>
          <Slot $w={27}><IconNavigator /></Slot>
          <Sep $w={10} />
          <Slot $w={88} $start={5}><IconOrder /><ToolText>Nový pokyn</ToolText></Slot>
          <Slot $w={118} $start={5}><IconStrategy /><ToolText>Zapnout strategie</ToolText></Slot>
          <EndSep $w={3} />
          <Grip $w={8} />
          <Slot $w={28}><IconBars /></Slot>
          <Slot $w={30}><Face $active><IconCandle /></Face></Slot>
          <Slot $w={23}><IconLine /></Slot>
          <Sep $w={8} />
          <Slot $w={27}><Magnifier plus /></Slot>
          <Slot $w={27}><Magnifier /></Slot>
          <Sep $w={8} />
          <Slot $w={28}><Face $active><IconAuto /></Face></Slot>
          <Slot $w={27}><IconShift /></Slot>
          <Sep $w={7} />
          <Slot $w={34} $start={5}><IconIndicators /><Caret /></Slot>
          <Slot $w={35} $start={5}><IconClock /><Caret /></Slot>
          <Slot $w={35} $start={5}><IconTemplateWin /><Caret /></Slot>
          <EndSep $w={3} />
          <Grip $w={7} />
          <Slot $w={27}><Face $active><IconCursor /></Face></Slot>
          <Slot $w={27}><IconCross /></Slot>
          <Sep $w={8} />
          <Slot $w={26}><IconV /></Slot>
          <Slot $w={31}><IconH /></Slot>
          <Slot $w={26}><IconTrend /></Slot>
          <Slot $w={29}><IconChannel /></Slot>
          <Slot $w={28}><IconFibo /></Slot>
          <Slot $w={27}><Face><LetterA>A</LetterA></Face></Slot>
          <Slot $w={30}><IconTextBox /></Slot>
          <Slot $w={33} $start={5}><IconArrows /><Caret /></Slot>
          <EndSep $w={3} />
          <Grip $w={6} />
          {frames.map((f, i) => <Slot key={f} $w={frameW[i]}><Face $active={f === "M5"}>{f}</Face></Slot>)}
          <EndSep $w={2} />
        </Toolbar>
        <Mdi>
          <ChildWindow $x={724} $y={3} $w={554} $h={330} $pad="0 4px 0 8px">
            <ChildTitle $h={27} $left={1}>
              <IconChild /><ChildTitleText>GBPUSD,M30</ChildTitleText><Spacer />
              <Controls $right={1}><Ctl><GMin /></Ctl><Ctl><GMax /></Ctl><Ctl><GClose /></Ctl></Controls>
            </ChildTitle>
            <Client><GbpChart /></Client>
          </ChildWindow>
          <ChildWindow $x={722} $y={327} $w={554} $h={327} $pad="0 4px 6px 8px">
            <ChildTitle $h={30} $left={1}>
              <IconChild /><ChildTitleText>EURGBP,M30</ChildTitleText><Spacer />
              <Controls $right={1}><Ctl><GMin /></Ctl><Ctl><GMax /></Ctl><Ctl><GClose /></Ctl></Controls>
            </ChildTitle>
            <Client><EurGbpChart /></Client>
          </ChildWindow>
          <ChildWindow $x={1} $y={2} $w={719} $h={649} $pad="0 4px 5px 3px">
            <ChildTitle $active $h={30} $left={5}>
              <IconChild /><ChildTitleText>EURUSD,M5</ChildTitleText><Spacer />
              <Controls $right={1}><Ctl><GMin /></Ctl><Ctl><GMax /></Ctl><Ctl $red><GClose /></Ctl></Controls>
            </ChildTitle>
            <Client><EurChart /></Client>
          </ChildWindow>
        </Mdi>
        <Tabs>
          {tabs.map(([t, w, a], i) => <Tab key={i} $w={w} $active={a}>{t}</Tab>)}
          <TabArrows><Arrow $left /><Arrow /></TabArrows>
        </Tabs>
        <Status>
          <Cell $w={559} $first>Pro pomoc, stiskněte F1</Cell>
          <Cell $w={109}>Default</Cell>
          <Cell $w={101}>2010.12.21 07:35</Cell>
          <Cell $w={72}>O: 1.3192</Cell>
          <Cell $w={71}>H: 1.3198</Cell>
          <Cell $w={69}>L: 1.3187</Cell>
          <Cell $w={70}>C: 1.3188</Cell>
          <Cell $w={66}>V: 121</Cell>
          <Cell $w={60}><IconSignal /></Cell>
          <Traffic>1100/6 kb</Traffic>
        </Status>
      </AppWindow>
      <Taskbar><TaskStart /><TaskBand /><TaskRest /></Taskbar>
    </Page>
  );
}
